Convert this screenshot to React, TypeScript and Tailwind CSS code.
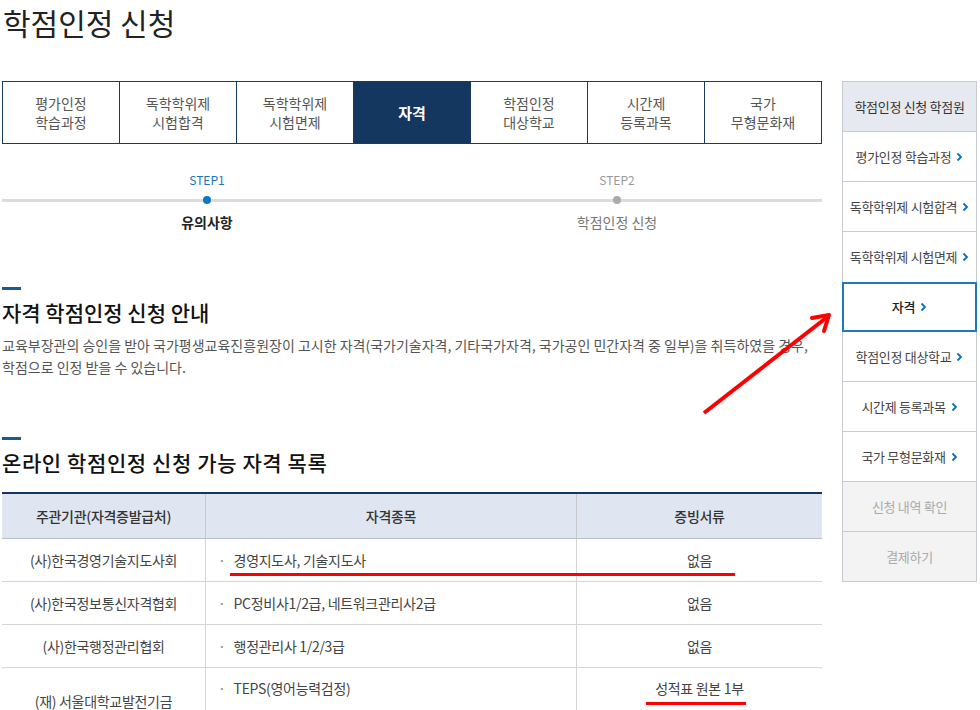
import React from "react";

const tabs = [
  ["평가인정", "학습과정"],
  ["독학학위제", "시험합격"],
  ["독학학위제", "시험면제"],
  ["자격"],
  ["학점인정", "대상학교"],
  ["시간제", "등록과목"],
  ["국가", "무형문화재"],
];

const side = [
  { t: "평가인정 학습과정", k: "n" },
  { t: "독학학위제 시험합격", k: "n" },
  { t: "독학학위제 시험면제", k: "n" },
  { t: "자격", k: "a" },
  { t: "학점인정 대상학교", k: "n" },
  { t: "시간제 등록과목", k: "n" },
  { t: "국가 무형문화재", k: "n" },
  { t: "신청 내역 확인", k: "d" },
  { t: "결제하기", k: "d" },
];

const rows = [
  ["(사)한국경영기술지도사회", "경영지도사, 기술지도사", "없음"],
  ["(사)한국정보통신자격협회", "PC정비사1/2급, 네트워크관리사2급", "없음"],
  ["(사)한국행정관리협회", "행정관리사 1/2/3급", "없음"],
];

function Chevron() {
  return (
    <svg width="7" height="10" viewBox="0 0 7 10" className="ml-[5px] inline-block">
      <path d="M1.5 1.5 L5 5 L1.5 8.5" fill="none" stroke="#0a6fb8" strokeWidth="1.8" />
    </svg>
  );
}

export default function App() {
  return (
    <div className="relative w-[980px] h-[710px] overflow-hidden bg-white font-['Noto_Sans_CJK_KR','Noto_Sans',sans-serif]">
      <div className="flex">
        {/* left column */}
        <div className="w-[822px] pl-[2px]">
          <h1 className="leading-[44px] text-[30px] text-[#222] pl-[1px] font-normal">학점인정 신청</h1>

          {/* tabs */}
          <div className="mt-[37px] flex h-[63px] border border-[#1a3a66]">
            {tabs.map((t, i) => {
              const active = i === 3;
              return (
                <div
                  key={i}
                  className={
                    "flex-1 flex flex-col items-center justify-center text-[14px] leading-[19px] " +
                    (i > 0 ? "border-l border-[#1a3a66] " : "") +
                    (active ? "bg-[#14375f] text-white font-bold text-[15px]" : "text-[#555]")
                  }
                >
                  {t.map((s, j) => (
                    <span key={j}>{s}</span>
                  ))}
                </div>
              );
            })}
          </div>

          {/* steps */}
          <div className="relative mt-[28px]">
            <div className="absolute left-0 right-0 top-[27px] h-[3px] bg-[#dcdcdc]" />
            <div className="relative flex">
              <div className="flex-1 flex flex-col items-center">
                <span className="text-[12px] leading-[16px] text-[#1d73bb]">STEP1</span>
                <span className="mt-[8px] w-[8px] h-[8px] rounded-full bg-[#0a78c2]" />
                <span className="mt-[8px] text-[14px] leading-[20px] font-bold text-[#222]">유의사항</span>
              </div>
              <div className="flex-1 flex flex-col items-center">
                <span className="text-[12px] leading-[16px] text-[#999]">STEP2</span>
                <span className="mt-[8px] w-[8px] h-[8px] rounded-full bg-[#aaa]" />
                <span className="mt-[8px] text-[14px] leading-[20px] text-[#777]">학점인정 신청</span>
              </div>
            </div>
          </div>

          {/* section 1 */}
          <div className="mt-[55px] w-[19px] h-[3px] bg-[#1a5b8c]" />
          <h2 className="mt-[8px] text-[21px] leading-[28px] font-medium text-[#111]">자격 학점인정 신청 안내</h2>
          <p className="mt-[8px] text-[14px] leading-[22px] text-[#555]">
            교육부장관의 승인을 받아 국가평생교육진흥원장이 고시한 자격(국가기술자격, 기타국가자격, 국가공인 민간자격 중 일부)을 취득하였을 경우,
            <br />
            학점으로 인정 받을 수 있습니다.
          </p>

          {/* section 2 */}
          <div className="mt-[59px] w-[19px] h-[3px] bg-[#1a5b8c]" />
          <h2 className="mt-[8px] text-[21px] leading-[28px] font-medium text-[#111] tracking-[0.6px]">온라인 학점인정 신청 가능 자격 목록</h2>

          <div className="mt-[16px] border-t-2 border-[#14375f] text-[14px] text-[#444] tracking-[-0.3px]">
            <div className="grid grid-cols-[204px_371px_1fr] h-[45px] bg-[#dfe6f1] border-b border-[#b9bec6] font-medium text-[#333]">
              <div className="flex items-center justify-center border-r border-[#c9c9c9]">주관기관(자격증발급처)</div>
              <div className="flex items-center justify-center border-r border-[#c9c9c9]">자격종목</div>
              <div className="flex items-center justify-center">증빙서류</div>
            </div>
            {rows.map((r, i) => (
              <div key={i} className="grid grid-cols-[204px_371px_1fr] h-[43px] border-b border-[#d5d5d5]">
                <div className="flex items-center justify-center border-r border-[#d5d5d5]">{r[0]}</div>
                <div className="flex items-center pl-[12px] border-r border-[#d5d5d5]">
                  <span className="text-[#888] mr-[8px]">·</span>
                  {r[1]}
                </div>
                <div className="flex items-center justify-center">{r[2]}</div>
              </div>
            ))}
            <div className="grid grid-cols-[204px_371px_1fr] h-[66px]">
              <div className="flex items-center justify-center border-r border-[#d5d5d5] pt-[1px]">(재) 서울대학교발전기금</div>
              <div className="flex items-start pl-[12px] pt-[10px] border-r border-[#d5d5d5]">
                <span className="text-[#888] mr-[8px]">·</span>
                TEPS(영어능력검정)
              </div>
              <div className="flex items-start justify-center pt-[10px]">성적표 원본 1부</div>
            </div>
          </div>
        </div>

        {/* sidebar */}
        <div className="ml-[20px] mt-[81px] w-[135px] text-[13px] tracking-[-0.3px]">
          <div className="h-[51px] flex items-center justify-center bg-[#e6e9ef] border border-[#c5cad3] text-[#333]">
            학점인정 신청 학점원
          </div>
          {side.map((s, i) => {
            if (s.k === "a") {
              return (
                <div key={i} className="h-[50px] flex items-center justify-center border-2 border-[#1b7bc0] text-[#222] font-medium">
                  {s.t}
                  <Chevron />
                </div>
              );
            }
            if (s.k === "d") {
              return (
                <div key={i} className="h-[50px] flex items-center justify-center bg-[#f3f3f3] border border-t-0 border-[#c5cad3] text-[#aaa]">
                  {s.t}
                </div>
              );
            }
            const nextActive = side[i + 1]?.k === "a";
            return (
              <div
                key={i}
                className={
                  "h-[50px] flex items-center justify-center border-x border-[#c5cad3] text-[#444] " +
                  (nextActive ? "" : "border-b")
                }
              >
                {s.t}
                <Chevron />
              </div>
            );
          })}
        </div>
      </div>

      {/* annotations */}
      <div className="absolute left-[230px] top-[573px] w-[505px] h-[3px] bg-[#ff0000]" />
      <div className="absolute left-[646px] top-[702px] w-[100px] h-[3px] bg-[#ff0000]" />
      <svg className="absolute left-0 top-0 pointer-events-none" width="980" height="710">
        <line x1="704" y1="413" x2="826" y2="318" stroke="#ff0000" strokeWidth="4" />
        <path d="M829 315 L812 318 M829 315 L824 331" stroke="#ff0000" strokeWidth="4" fill="none" strokeLinecap="round" />
      </svg>
    </div>
  );
}
